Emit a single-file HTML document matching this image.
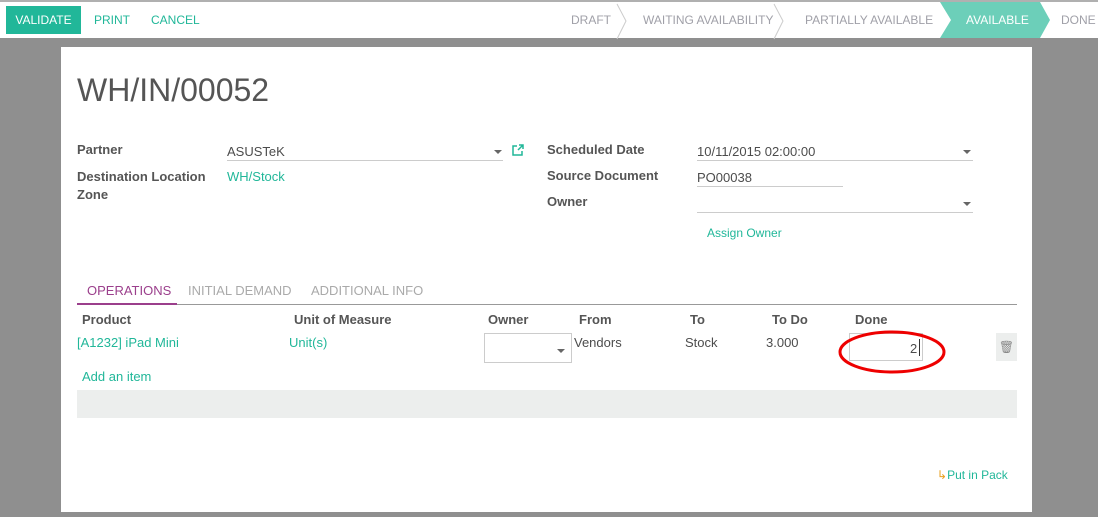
<!DOCTYPE html>
<html><head><style>
body{margin:0;width:1098px;height:517px;background:#8f8f8f;position:relative;overflow:hidden;font-family:"Liberation Sans",Arial,sans-serif;font-size:13px;color:#4c4c4c}
.a{position:absolute;white-space:nowrap}
.top{position:absolute;left:0;top:0;width:1098px;height:38px;background:#fff;border-top:2px solid #b0b0b0;box-sizing:border-box}
.sheet{position:absolute;left:61px;top:47px;width:971px;height:465px;background:#fff}
.lbl{font-weight:bold;color:#555}
.g{color:#21b799}
.st{color:#a0a0a8;font-size:12px}
.th{font-weight:bold;color:#555}
.line{position:absolute;height:1px;background:#ccc}
.tri{position:absolute;width:0;height:0;border-left:4px solid transparent;border-right:4px solid transparent;border-top:4px solid #666}
</style></head><body>
<div class="top">
<div class="a" style="left:6px;top:4px;width:75px;height:28px;background:#21b799;color:#fff;font-size:12px;line-height:28px;text-align:center">VALIDATE</div>
<div class="a g" style="left:94px;top:11px;font-size:12px">PRINT</div>
<div class="a g" style="left:151px;top:11px;font-size:12px">CANCEL</div>
<div class="a st" style="left:571px;top:11px">DRAFT</div>
<svg class="a" style="left:615px;top:0" width="20" height="38"><path d="M2 2 L11 19 L2 37" fill="none" stroke="#ccc"/></svg>
<div class="a st" style="left:643px;top:11px">WAITING AVAILABILITY</div>
<svg class="a" style="left:772px;top:0" width="20" height="38"><path d="M2 2 L11 19 L2 37" fill="none" stroke="#ccc"/></svg>
<div class="a st" style="left:805px;top:11px">PARTIALLY AVAILABLE</div>
<svg class="a" style="left:940px;top:0" width="112" height="38"><path d="M0 0 L100 0 L110 18 L100 36 L0 36 L11 18 Z" fill="#6ccfb9"/></svg>
<div class="a" style="left:966px;top:11px;font-size:12px;color:#fff">AVAILABLE</div>
<div class="a st" style="left:1061px;top:11px">DONE</div>
</div>
<div class="sheet">
<div class="a" style="left:16px;top:25px;font-size:32px;color:#555">WH/IN/00052</div>
<div class="a lbl" style="left:16px;top:95px">Partner</div>
<div class="a" style="left:166px;top:97px">ASUSTeK</div>
<div class="line" style="left:166px;top:113px;width:276px"></div>
<div class="tri" style="left:433px;top:103px"></div>
<svg class="a" style="left:450px;top:96px" width="14" height="14"><path d="M6 3H2V12H11V8M7 7L12 2M8 2H12V6" fill="none" stroke="#21b799" stroke-width="1.5"/></svg>
<div class="a lbl" style="left:16px;top:121px;line-height:18px">Destination Location<br>Zone</div>
<div class="a g" style="left:166px;top:122px">WH/Stock</div>
<div class="a lbl" style="left:486px;top:95px">Scheduled Date</div>
<div class="a" style="left:636px;top:97px">10/11/2015 02:00:00</div>
<div class="line" style="left:636px;top:113px;width:276px"></div>
<div class="tri" style="left:902px;top:103px"></div>
<div class="a lbl" style="left:486px;top:121px">Source Document</div>
<div class="a" style="left:636px;top:123px">PO00038</div>
<div class="line" style="left:636px;top:139px;width:146px"></div>
<div class="a lbl" style="left:486px;top:147px">Owner</div>
<div class="line" style="left:636px;top:165px;width:276px"></div>
<div class="tri" style="left:902px;top:155px"></div>
<div class="a g" style="left:646px;top:179px;font-size:12px">Assign Owner</div>
<div class="a" style="left:26px;top:236px;color:#9b3f8c">OPERATIONS</div>
<div class="a" style="left:127px;top:236px;color:#aaa">INITIAL DEMAND</div>
<div class="a" style="left:250px;top:236px;color:#aaa">ADDITIONAL INFO</div>
<div class="line" style="left:16px;top:257px;width:940px;background:#999"></div>
<div class="a" style="left:16px;top:256px;width:100px;height:2px;background:#9b3f8c"></div>
<div class="a th" style="left:21px;top:265px">Product</div>
<div class="a th" style="left:233px;top:265px">Unit of Measure</div>
<div class="a th" style="left:427px;top:265px">Owner</div>
<div class="a th" style="left:518px;top:265px">From</div>
<div class="a th" style="left:629px;top:265px">To</div>
<div class="a th" style="left:711px;top:265px">To Do</div>
<div class="a th" style="left:794px;top:265px">Done</div>
<div class="a g" style="left:16px;top:288px">[A1232] iPad Mini</div>
<div class="a g" style="left:228px;top:288px">Unit(s)</div>
<div class="a" style="left:423px;top:286px;width:86px;height:28px;border:1px solid #ccc"></div>
<div class="tri" style="left:496px;top:302px"></div>
<div class="a" style="left:513px;top:288px">Vendors</div>
<div class="a" style="left:624px;top:288px">Stock</div>
<div class="a" style="left:705px;top:288px">3.000</div>
<div class="a" style="left:788px;top:286px;width:74px;height:28px;border:1px solid #ccc;box-sizing:border-box"></div>
<div class="a" style="left:849px;top:294px">2</div>
<div class="a" style="left:858px;top:292px;width:1px;height:17px;background:#333"></div>
<div class="a" style="left:935px;top:286px;width:21px;height:28px;background:#eceeed;text-align:center;line-height:28px;color:#888;font-size:12px">🗑</div>
<svg class="a" style="left:775px;top:282px" width="112" height="48"><ellipse cx="56" cy="23" rx="52" ry="20" fill="none" stroke="#e00" stroke-width="3"/></svg>
<div class="a g" style="left:21px;top:322px">Add an item</div>
<div class="a" style="left:16px;top:343px;width:940px;height:28px;background:#eceeed"></div>
<div class="a g" style="left:876px;top:421px;font-size:12px"><span style="color:#e8a020">↳</span>Put in Pack</div>
</div>
</body></html>
